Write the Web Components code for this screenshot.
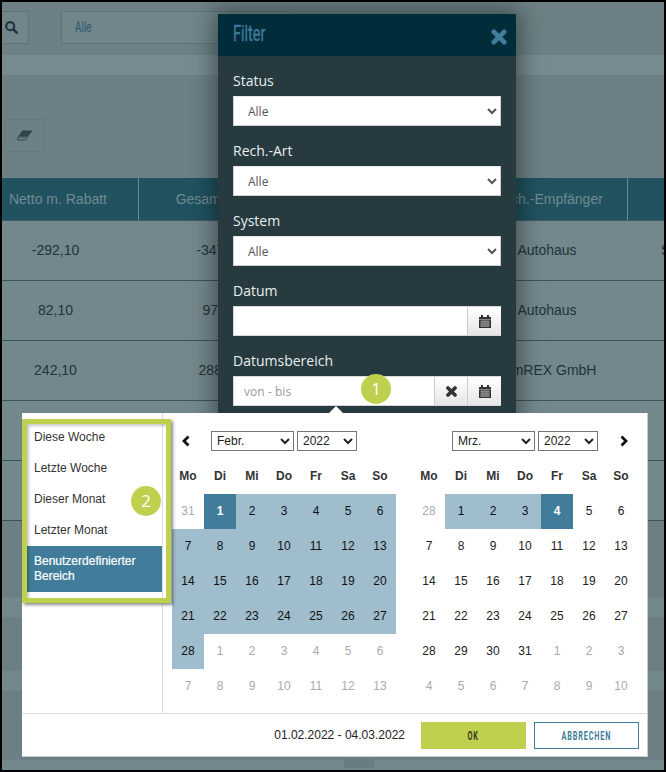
<!DOCTYPE html>
<html lang="de"><head><meta charset="utf-8"><title>Filter</title>
<style>
html,body{margin:0;padding:0;background:#000}
body{font-family:"Liberation Sans",Arial,sans-serif}
</style></head><body>
<x-app></x-app>
<script>
const CAL='<svg width="12" height="13" viewBox="0 0 12 13"><path fill="#333" d="M2 0h2v2h4V0h2v2h2v11H0V2h2z"/><path fill="none" stroke="#ddd" stroke-width=".5" d="M0 4.500h12M1 6.800h10M1 8.900h10M1 11h10M3 5v7M5 5v7M7 5v7M9 5v7"/></svg>';
const XI=(c,s,w=4.200)=>`<svg width="${s}" height="${s}" viewBox="0 0 14 14"><path fill="none" stroke="${c}" stroke-width="${w}" stroke-linecap="round" stroke-linejoin="round" d="M2.500 2.500l9 9M11.500 2.500l-9 9"/></svg>`;

function def(name,css,html){
  customElements.define(name,class extends HTMLElement{
    connectedCallback(){
      if(this.shadowRoot)return;
      const r=this.attachShadow({mode:'open'});
      const h=typeof html==='function'?html(this):html;
      r.innerHTML=`<style>${css}</style>${h}`;
    }
  });
}

def('x-top-bar',`
:host{display:flex;height:53px;box-sizing:border-box;padding-top:9px;background:#6c8085;align-items:flex-start}
.s{width:27px;height:33px;box-sizing:border-box;border:1px solid #5f7378;border-left:0;background:#71868b;display:flex;align-items:center;padding-left:3px}
.f{margin-left:32px;width:229px;height:33px;box-sizing:border-box;border:1px solid #5f7378;background:#71868b;padding-left:13px;color:#2e5a6d;font:15.500px/31px Roboto,sans-serif;overflow:hidden}
.f span{display:inline-block;transform:scaleX(.64);transform-origin:0 50%}
`,`<div class="s"><svg width="13" height="13" viewBox="0 0 13 13"><circle cx="5.200" cy="5.200" r="4" fill="none" stroke="#22393f" stroke-width="2.200"/><path d="M8.200 8.200l3.500 3.500" stroke="#22393f" stroke-width="2.600" stroke-linecap="round"/></svg></div><div class="f"><span>Alle</span></div>`);

def('x-band',`:host{display:block;height:20px;background:#768b90}`,``);

def('x-tools',`
:host{display:block;height:103px;box-sizing:border-box;padding:44px 0 0 3px;background:#6c8085}
.b{width:40px;height:33px;box-sizing:border-box;border:1px solid #64787d;display:flex;align-items:center;justify-content:center}
`,`<div class="b"><svg width="16" height="11" viewBox="0 0 16 11"><path fill="#2f454b" d="M5.500 .5h10L11 6.500H1z"/><path fill="none" stroke="#2f454b" stroke-width=".9" d="M1 7l9.500 0-2 3H.8L1 7z"/></svg></div>`);

def('x-table',`
:host{display:block;font:14px "Liberation Sans",Arial,sans-serif}
.r{display:grid;grid-template-columns:136px 1px 162px 168px 158px 1px 37px;height:60px;box-sizing:border-box;border-bottom:1px solid #3f5359;background:#73888d;color:#20343a;text-align:center;line-height:58px;white-space:nowrap;overflow:hidden}
.h{height:43px;background:#20525f;color:#718a92;line-height:42px;border-bottom:1px solid #3f5965}
.h i{background:#6f8a94}
.r>span:first-child{padding-right:29px}
.h>span:first-child{padding-right:24px}
.au{padding-right:2px}
.am{padding-right:5px}
.l{text-align:left;padding-left:33px}
.bands{height:249px;background:linear-gradient(#687c81,#687c81) 342px 237px/30px 10px no-repeat,linear-gradient(#6b7f84 0 76px,#73888d 76px 96px,#6b7f84 96px 150px,#73888d 150px 170px,#6b7f84 170px 239px,#73888d 239px)}
`,`
<div class="r h"><span>Netto m. Rabatt</span><i></i><span>Gesamt brutto</span><span></span><span>Rech.-Empfänger</span><i></i><span></span></div>
<div class="r"><span>-292,10</span><i></i><span>-347,60</span><span></span><span class="au">Autohaus</span><i></i><span class="l">S</span></div>
<div class="r"><span>82,10</span><i></i><span>97,70</span><span></span><span class="au">Autohaus</span><i></i><span></span></div>
<div class="r"><span>242,10</span><i></i><span>288,10</span><span></span><span class="am">AamREX GmbH</span><i></i><span></span></div>
<div class="r"></div>
<div class="r"></div>
<div class="bands"></div>`);

def('x-select',`
:host{display:block;height:30px}
select{display:block;width:100%;height:30px;box-sizing:border-box;border:1px solid #d0d0d0;border-top-color:#e8e8e8;border-radius:0;background:#fff;color:#555;font:12px "Open Sans",sans-serif;padding-left:10px;outline:0}
`,`<select><option>Alle</option></select>`);

def('x-date-input',`
:host{display:flex;height:30px;background:#fff;box-sizing:border-box;border:1px solid #d8d8d8;border-right:0}
.t{flex:1;color:#999;font:12px/29px "Open Sans",sans-serif;padding-left:10px;letter-spacing:.05px}
.a{width:33px;border-left:1px solid #ccc;background:linear-gradient(#fff,#e6e6e6);display:flex;align-items:center;justify-content:center}
.n{width:32px}
`,h=>`<div class="t">${h.getAttribute('placeholder')||''}</div>${h.hasAttribute('clear')?`<div class="a n">${XI('#333',11,4.600)}</div>`:''}<div class="a">${CAL}</div>`);

def('x-filter-modal',`
:host{position:absolute;left:216px;top:12px;width:298px;height:520px;background:#263a40;box-shadow:0 0 22px 4px rgba(0,0,0,.42);display:block}
header{height:42px;background:#012d3b;position:relative;color:#3f7a98}
h1{margin:0;position:absolute;left:15px;top:4px;font:400 22px/32px Roboto,sans-serif;transform:scaleX(.66);transform-origin:0 50%;-webkit-text-stroke:.4px #3f7a98}
.x{position:absolute;left:273px;top:15px;line-height:0}
.b{padding:15px}
.lbl{display:block;height:20px;margin-bottom:5px;color:#e9eeef;font:14px/20px "Open Sans",sans-serif}
.f{margin-bottom:15px}
`,`<header><h1>Filter</h1><div class="x">${XI('#417d9b',16)}</div></header>
<div class="b">
<div class="f"><span class="lbl">Status</span><x-select></x-select></div>
<div class="f"><span class="lbl">Rech.-Art</span><x-select></x-select></div>
<div class="f"><span class="lbl">System</span><x-select></x-select></div>
<div class="f"><span class="lbl">Datum</span><x-date-input></x-date-input></div>
<div class="f"><span class="lbl">Datumsbereich</span><x-date-input placeholder="von - bis" clear></x-date-input></div>
</div>`);

def('x-month',`
:host{display:block;width:224px}
.top{display:flex;height:20px;margin-bottom:8px;align-items:center}
.nav{display:flex;align-items:center;line-height:0}
select{height:20px;box-sizing:border-box;border:1px solid #777;border-radius:0;background:#fff;color:#222;font:12px "Liberation Sans",sans-serif;padding:0 0 0 1px;outline:0;margin-right:3px}
.g{display:grid;grid-template-columns:repeat(7,32px);grid-auto-rows:35px;text-align:center;font:12px/35px "Liberation Sans",sans-serif;color:#222}
b{font-weight:700;color:#333}
.o{color:#aaa}.r{background:#9fbdcc;color:#111}.a{background:#417d9b;color:#fff;font-weight:700}
`,h=>{
  const left=h.getAttribute('side')==='left';
  const days=h.getAttribute('days').split(' ');
  const cells=days.map(d=>{const m=d.match(/^(\d+)([ora]?)$/);return `<span class="${m[2]}">${m[1]}</span>`}).join('');
  const chev=p=>`<svg width="10" height="12" viewBox="0 0 10 12"><path fill="none" stroke="#111" stroke-width="2.800" d="${p}"/></svg>`;
  return `<div class="top">${left?`<span class="nav" style="width:39px;padding-left:9px;box-sizing:border-box">${chev('M7.500 1.500L3 6l4.500 4.500')}</span>`:`<span style="width:39px"></span>`}
  <select style="width:83px"><option>${h.getAttribute('month')}</option></select><select style="width:60px"><option>2022</option></select>
  ${left?'':`<span class="nav" style="width:36px;padding-left:18px;box-sizing:border-box">${chev('M2.500 1.500L7 6l-4.500 4.500')}</span>`}</div>
  <div class="g">${['Mo','Di','Mi','Do','Fr','Sa','So'].map(d=>`<b>${d}</b>`).join('')}${cells}</div>`;
});

def('x-range-picker',`
:host{position:absolute;left:20px;top:411px;width:626px;height:344px;box-sizing:border-box;background:#fff;border-right:1px solid #ccc;border-bottom:1px solid #ccc;display:flex;flex-direction:column;color:#222}
:host::before{content:"";position:absolute;left:307px;top:-7px;border:7px solid transparent;border-top:0;border-bottom-color:#fff}
.m{display:flex;flex:1}
aside{border-right:1px solid #ddd;padding:9px 0 0 5px;width:135px;font:12px/31px "Liberation Sans",sans-serif}
aside div{height:31px;padding-left:7px;color:#333}
aside .act{height:46px;line-height:15px;box-sizing:border-box;padding-top:8px;background:#417d9b;color:#fff;-webkit-text-stroke:.2px #fff}
.c{display:flex;gap:17px;padding:18px 0 0 9px}
footer{height:42px;border-top:1px solid #ddd;display:flex;justify-content:flex-end;align-items:center;padding-right:8px;font:12px "Liberation Sans",sans-serif;color:#222;flex:none}
.d{margin-right:16px}
.btn{width:105px;height:27px;box-sizing:border-box;display:flex;align-items:center;justify-content:center;overflow:hidden}
.btn span{display:inline-block;font:700 13px Roboto,sans-serif;letter-spacing:1.500px;transform:scaleX(.56)}
.ok{background:#bfd04f;color:#333c1f}
.ab{background:#fff;border:1px solid #417d9b;color:#417d9b;margin-left:8px}
`,`<div class="m"><aside><div>Diese Woche</div><div>Letzte Woche</div><div>Dieser Monat</div><div>Letzter Monat</div><div class="act">Benutzerdefinierter Bereich</div></aside>
<div class="c">
<x-month side="left" month="Febr." days="31o 1a 2r 3r 4r 5r 6r 7r 8r 9r 10r 11r 12r 13r 14r 15r 16r 17r 18r 19r 20r 21r 22r 23r 24r 25r 26r 27r 28r 1o 2o 3o 4o 5o 6o 7o 8o 9o 10o 11o 12o 13o"></x-month>
<x-month side="right" month="Mrz." days="28o 1r 2r 3r 4a 5 6 7 8 9 10 11 12 13 14 15 16 17 18 19 20 21 22 23 24 25 26 27 28 29 30 31 1o 2o 3o 4o 5o 6o 7o 8o 9o 10o"></x-month>
</div></div>
<footer><span class="d">01.02.2022 - 04.03.2022</span><div class="btn ok"><span>OK</span></div><div class="btn ab"><span>ABBRECHEN</span></div></footer>`);

def('x-callout',`
:host{position:absolute;left:20px;top:417px;width:149px;height:184px;box-sizing:border-box;border:5px solid #bfd04f;box-shadow:2px 2px 3px rgba(0,0,0,.45),inset 2px 2px 3px rgba(0,0,0,.22);display:block;pointer-events:none}
`,``);
def('x-badge',`
:host{position:absolute;width:30px;height:30px;border-radius:50%;background:#bfd04f;color:#fff;font:17px/30px "Open Sans",sans-serif;text-align:center}
`,`<slot></slot>`);

def('x-app',`
:host{display:block;position:relative;width:662px;height:768px;border:2px solid #000;overflow:hidden}
`,`<x-top-bar></x-top-bar><x-band></x-band><x-tools></x-tools><x-table></x-table>
<x-filter-modal></x-filter-modal>
<x-range-picker></x-range-picker>
<x-callout></x-callout>
<x-badge style="left:359px;top:372px">1</x-badge>
<x-badge style="left:129px;top:484px">2</x-badge>`);
</script>
</body></html>
